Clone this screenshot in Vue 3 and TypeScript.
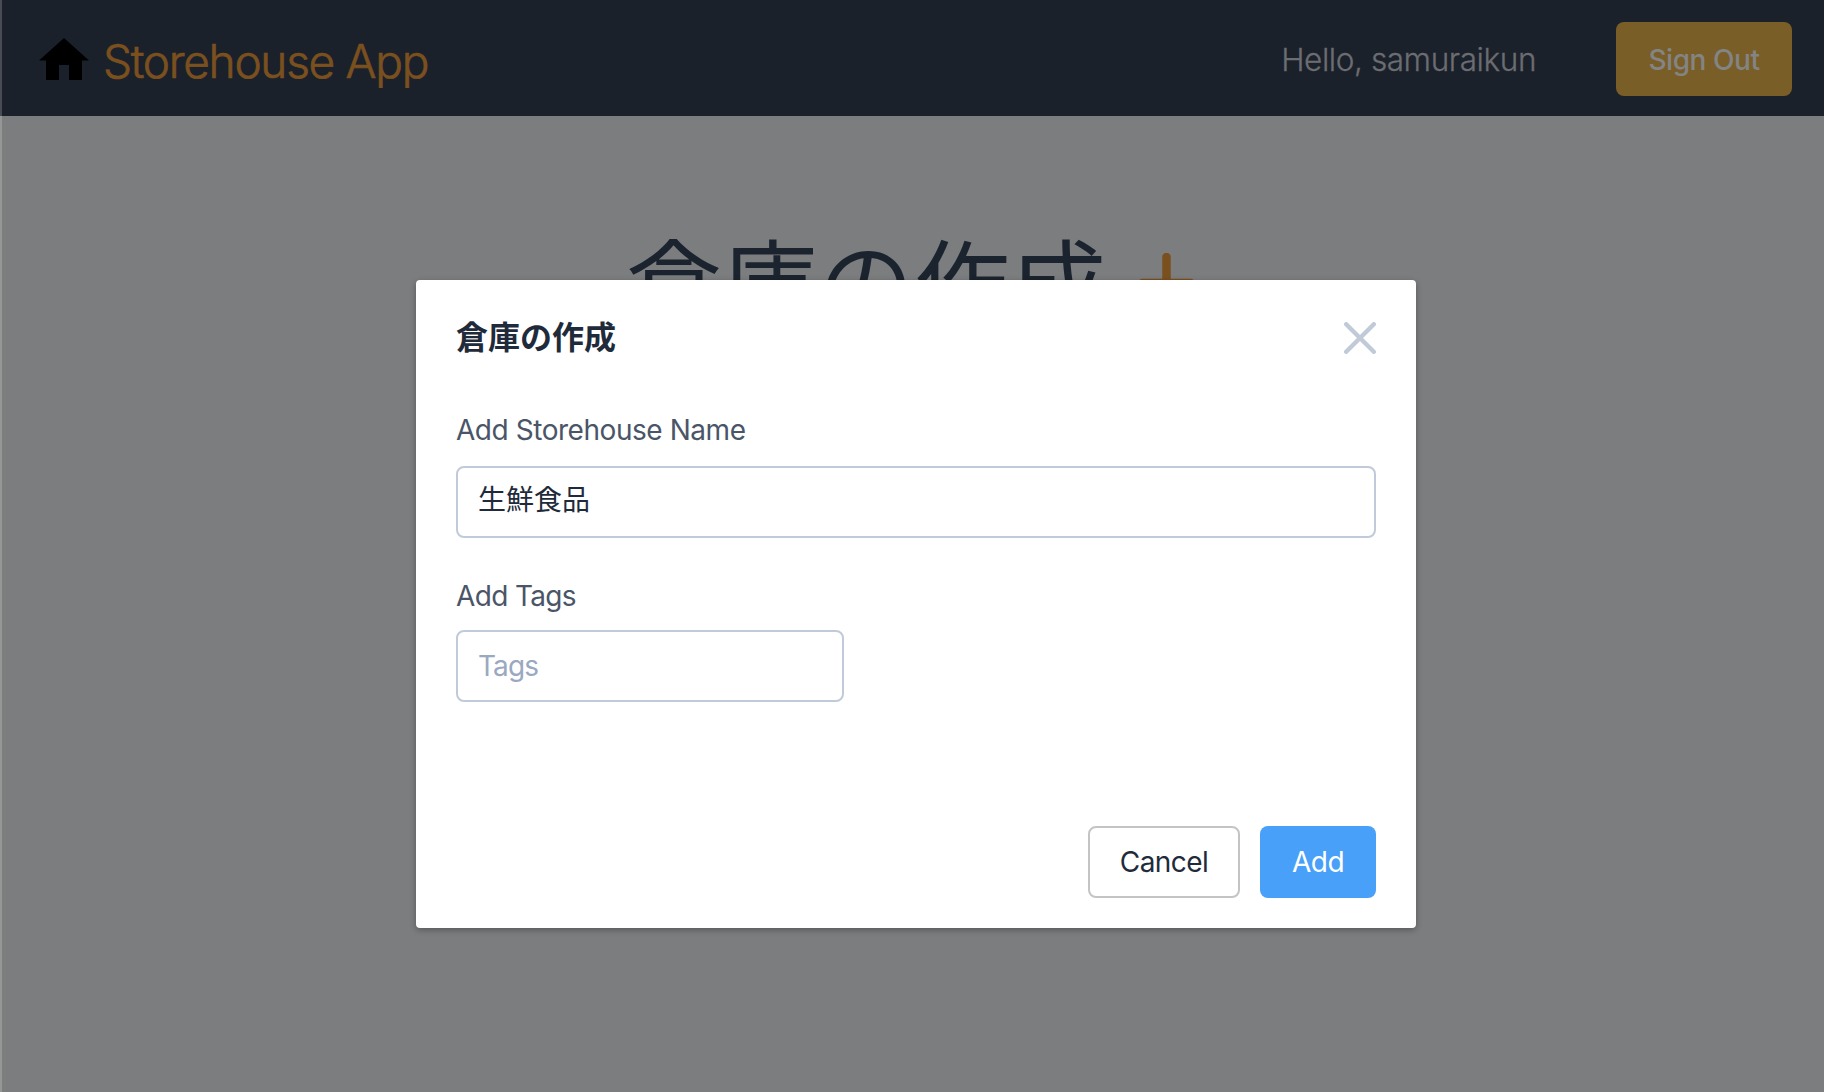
<script setup lang="ts">
import { ref } from 'vue'

const user = ref('samuraikun')
const storehouseName = ref('生鮮食品')
const tags = ref('')
</script>

<template>
  <div class="page">
    <header class="navbar">
      <div class="brand">
        <svg class="home" viewBox="0 0 50 42" width="50" height="42">
          <path d="M25 0 50 22.5H43V42H30V27H20V42H7V22.5H0Z" fill="#000" />
        </svg>
        <span class="brand-name">Storehouse App</span>
      </div>
      <div class="account">
        <span class="hello">Hello, {{ user }}</span>
        <button class="sign-out"><span>Sign Out</span></button>
      </div>
    </header>

    <main class="content">
      <h1 class="heading">倉庫の作成</h1>
      <svg class="plus" viewBox="0 0 62 62" width="62" height="62">
        <path d="M28.5 4V56M4.5 30H52.5" stroke="#7b501f" stroke-width="8.5" stroke-linecap="round" />
      </svg>
    </main>

    <div class="edge"></div>

    <div class="overlay">
      <section class="modal" role="dialog">
        <div class="modal-head">
          <h2 class="modal-title">倉庫の作成</h2>
          <svg class="close" viewBox="0 0 32 32" width="32" height="32">
            <path d="M2.2 2.2 29.8 29.8M29.8 2.2 2.2 29.8" stroke="#c1cad9" stroke-width="4.4" stroke-linecap="round" />
          </svg>
        </div>
        <label class="label name-label"><span>Add Storehouse Name</span></label>
        <input v-model="storehouseName" class="field name-field" type="text" />
        <label class="label tags-label"><span>Add Tags</span></label>
        <input v-model="tags" class="field tags-field" type="text" placeholder="Tags" />
        <div class="actions">
          <button class="btn cancel"><span>Cancel</span></button>
          <button class="btn add"><span>Add</span></button>
        </div>
      </section>
    </div>
  </div>
</template>

<style>
body {
  margin: 0;
  overflow: hidden;
}
</style>

<style scoped>
* {
  box-sizing: border-box;
}
.page {
  position: relative;
  width: 100%;
  height: 100vh;
  overflow: hidden;
  background: #7b7d7e;
  font-family: Inter, 'Noto Sans CJK JP', sans-serif;
}
.navbar {
  display: flex;
  align-items: center;
  justify-content: space-between;
  height: 116px;
  padding: 0 32px 0 39px;
  background: #1b212b;
}
.brand {
  display: flex;
  align-items: center;
}
.home {
  display: block;
  margin-top: 2px;
}
.brand-name {
  margin: 6px 0 0 14px;
  color: #7b501f;
  font-size: 46px;
  font-weight: 300;
  line-height: 60px;
  letter-spacing: -1.3px;
  -webkit-text-stroke: 0.7px #7b501f;
}
.account {
  display: flex;
  align-items: center;
}
.hello {
  margin: 4px 80px 0 0;
  color: #6b6d71;
  font-size: 31.5px;
  font-weight: 300;
  line-height: 44px;
  letter-spacing: -0.42px;
  -webkit-text-stroke: 0.3px #6b6d71;
}
.sign-out {
  width: 176px;
  height: 74px;
  margin-top: 2px;
  padding: 2px 0 0;
  border: 0;
  border-radius: 8px;
  background: #795e28;
  color: #848484;
  font: 500 28px/40px Inter, sans-serif;
  letter-spacing: -0.45px;
}
.content {
  display: flex;
  justify-content: center;
  padding: 116px 0 0 2px;
}
.heading {
  margin: 0;
  color: #1b232e;
  font-size: 96px;
  font-weight: 400;
  line-height: 106px;
}
.plus {
  margin: 21px 0 0 32px;
}
.edge {
  position: absolute;
  inset: 0 auto 0 0;
  width: 2px;
  background: rgba(255, 255, 255, 0.2);
}
.overlay {
  position: absolute;
  inset: 0;
  display: flex;
  align-items: flex-start;
  justify-content: center;
  padding: 280px 0 0 8px;
}
.modal {
  display: flex;
  flex-direction: column;
  width: 1000px;
  height: 648px;
  padding: 40px 40px 30px;
  border-radius: 4px;
  background: #fff;
  box-shadow: 0 2px 6px rgba(0, 0, 0, 0.3);
}
.modal-head {
  display: flex;
  justify-content: space-between;
  height: 36px;
}
.modal-title {
  margin: 0;
  color: #1f2b3b;
  font-size: 32px;
  font-weight: 700;
  line-height: 36px;
}
.close {
  margin-top: 2px;
}
.label {
  color: #4a5568;
  font-size: 28px;
  line-height: 40px;
  letter-spacing: -0.45px;
}
.name-label {
  margin-top: 54px;
}
.tags-label {
  margin-top: 38px;
  letter-spacing: -0.65px;
}
.field {
  height: 72px;
  border: 2px solid #c0cada;
  border-radius: 8px;
  outline: 0;
  background: #fff;
  color: #1f2b3b;
  font: 400 28px/40px Inter, 'Noto Sans CJK JP', sans-serif;
}
.name-field {
  width: 920px;
  margin-top: 16px;
  padding: 0 20px 8px;
}
.tags-field {
  width: 388px;
  margin-top: 14px;
  padding: 0 20px;
  letter-spacing: -0.9px;
}
.field::placeholder {
  color: #9aa9bf;
  opacity: 1;
}
.actions {
  display: flex;
  justify-content: flex-end;
  gap: 20px;
  margin-top: auto;
}
.btn {
  height: 72px;
  padding: 0;
  border-radius: 8px;
  font: 400 28px/40px Inter, sans-serif;
  letter-spacing: -0.55px;
}
.cancel {
  width: 152px;
  border: 2px solid #c4c4c4;
  background: #fff;
  color: #1f2b3b;
}
.add {
  width: 116px;
  border: 0;
  background: #48a0f8;
  color: #fff;
}
</style>
